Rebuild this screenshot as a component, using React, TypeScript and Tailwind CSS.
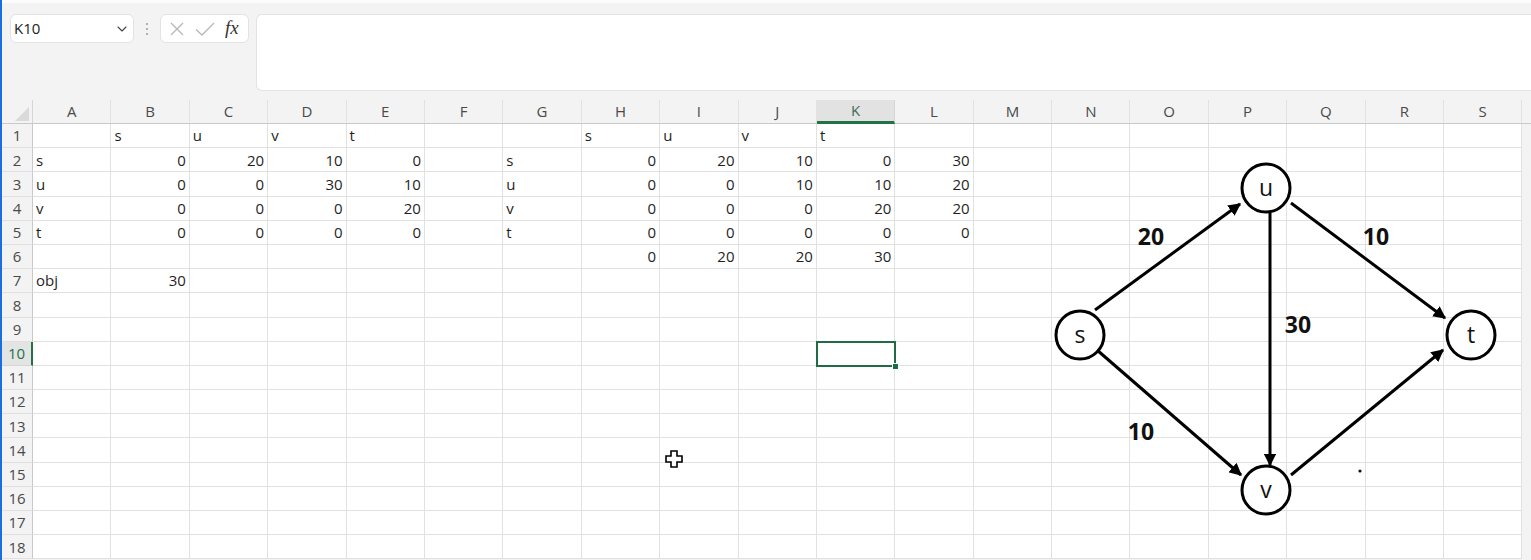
import { ChevronDown } from 'lucide-react';

const COLS = 'ABCDEFGHIJKLMNOPQRS'.split('');
const ROWS = Array.from({ length: 18 }, (_, i) => i + 1);

const data: Record<string, string> = {
  B1: 's', C1: 'u', D1: 'v', E1: 't',
  H1: 's', I1: 'u', J1: 'v', K1: 't',
  A2: 's', B2: '0', C2: '20', D2: '10', E2: '0',
  G2: 's', H2: '0', I2: '20', J2: '10', K2: '0', L2: '30',
  A3: 'u', B3: '0', C3: '0', D3: '30', E3: '10',
  G3: 'u', H3: '0', I3: '0', J3: '10', K3: '10', L3: '20',
  A4: 'v', B4: '0', C4: '0', D4: '0', E4: '20',
  G4: 'v', H4: '0', I4: '0', J4: '0', K4: '20', L4: '20',
  A5: 't', B5: '0', C5: '0', D5: '0', E5: '0',
  G5: 't', H5: '0', I5: '0', J5: '0', K5: '0', L5: '0',
  H6: '0', I6: '20', J6: '20', K6: '30',
  A7: 'obj', B7: '30',
};

function Toolbar() {
  return (
    <div className="h-[100px] border-t-[3px] border-[#fbfbfb] flex items-start pt-[11px] pl-[8px] gap-0">
      <div className="w-[124px] h-[29px] bg-white rounded-md border border-[#e3e3e3] flex items-center justify-between pl-[3px] pr-[3px] text-[15px] text-[#222]">
        <span>K10</span>
        <ChevronDown size={16} strokeWidth={1.6} className="text-[#444]" />
      </div>
      <div className="w-[26px] h-[29px] flex flex-col items-center justify-center gap-[3px]">
        <span className="w-[2px] h-[2px] bg-[#9a9a9a] rounded-full" />
        <span className="w-[2px] h-[2px] bg-[#9a9a9a] rounded-full" />
        <span className="w-[2px] h-[2px] bg-[#9a9a9a] rounded-full" />
      </div>
      <div className="w-[89px] h-[29px] bg-white rounded-md border border-[#e3e3e3] flex items-center pl-[8px] gap-[10px]">
        <svg width="16" height="16" viewBox="0 0 16 16" className="text-[#b8b8b8]">
          <path d="M2 2 L14 14 M14 2 L2 14" stroke="currentColor" strokeWidth="1.3" fill="none" />
        </svg>
        <svg width="20" height="16" viewBox="0 0 20 16" className="text-[#b8b8b8]">
          <path d="M1 8.5 L7 14 L19 2" stroke="currentColor" strokeWidth="1.3" fill="none" />
        </svg>
        <span className="font-['Liberation_Serif',serif] italic text-[19px] text-[#333] leading-none -mt-[2px]">fx</span>
      </div>
      <div className="ml-[7px] flex-1 h-[77px] bg-white rounded-l-md border border-r-0 border-[#e3e3e3]" />
    </div>
  );
}

function HeaderRow() {
  return (
    <div className="flex h-[24px] border-b border-[#c9c9c9]">
      <div className="w-[31px] shrink-0 relative border-r border-[#d6d6d6]">
        <svg width="14" height="14" viewBox="0 0 14 14" className="absolute right-[3px] bottom-[2px]">
          <polygon points="14,0 14,14 0,14" fill="#dadada" />
        </svg>
      </div>
      {COLS.map(c => (
        <div
          key={c}
          className={
            c === 'K'
              ? 'w-[78.4px] shrink-0 flex items-center justify-center text-[15px] text-[#3c6e53] bg-[#e2e2e2] border-r border-[#d6d6d6] border-b-[3px] border-b-[#217346] -mb-px'
              : 'w-[78.4px] shrink-0 flex items-center justify-center text-[15px] text-[#4a4a4a] border-r border-[#e2e2e2]'
          }
        >
          {c}
        </div>
      ))}
    </div>
  );
}

function Row({ r }: { r: number }) {
  const active = r === 10;
  return (
    <div className="flex h-[24.2px]">
      <div
        className={
          active
            ? 'w-[31px] shrink-0 flex items-center justify-center text-[15px] text-[#217346] bg-[#e4e4e4] border-r-2 border-[#217346] border-b border-b-[#d6d6d6]'
            : 'w-[31px] shrink-0 flex items-center justify-center text-[15px] text-[#4a4a4a] border-r border-[#c9c9c9] border-b border-b-[#e0e0e0]'
        }
      >
        {r}
      </div>
      {COLS.map(c => {
        const v = data[`${c}${r}`];
        const num = v !== undefined && /^\d+$/.test(v);
        return (
          <div
            key={c}
            className={
              'w-[78.4px] shrink-0 bg-white border-r border-b border-[#e1e1e1] flex items-center px-[3px] text-[15px] text-[#1f1f1f] relative ' +
              (num ? 'justify-end' : 'justify-start')
            }
          >
            {v}
            {active && c === 'K' && (
              <div className="absolute z-10 -left-px -top-px w-[80px] h-[26px] border-2 border-[#1e6b45]">
                <div className="absolute -right-[5px] -bottom-[5px] w-[7px] h-[7px] bg-[#1e6b45] border border-white" />
              </div>
            )}
          </div>
        );
      })}
    </div>
  );
}

function Graph() {
  const nodes = [
    { id: 's', x: 1078, y: 335 },
    { id: 'u', x: 1264, y: 188 },
    { id: 't', x: 1469, y: 335 },
    { id: 'v', x: 1264, y: 490 },
  ];
  const edges = [
    [1093, 310, 1238, 204],
    [1289, 203, 1443, 318],
    [1268, 213, 1268, 465],
    [1095, 350, 1239, 475],
    [1289, 475, 1441, 350],
  ];
  const labels = [
    { t: '20', x: 1149, y: 238 },
    { t: '10', x: 1374, y: 238 },
    { t: '30', x: 1296, y: 326 },
    { t: '10', x: 1139, y: 433 },
  ];
  return (
    <svg width="1531" height="560" viewBox="0 0 1531 560" className="absolute left-0 top-0 z-20 pointer-events-none">
      <defs>
        <marker id="arr" viewBox="0 0 10 10" refX="9" refY="5" markerWidth="4.2" markerHeight="4.2" orient="auto" markerUnits="strokeWidth">
          <path d="M0 0 L10 5 L0 10 z" fill="#000" />
        </marker>
      </defs>
      {edges.map((e, i) => (
        <line key={i} x1={e[0]} y1={e[1]} x2={e[2]} y2={e[3]} stroke="#000" strokeWidth="3" markerEnd="url(#arr)" />
      ))}
      {nodes.map(n => (
        <g key={n.id}>
          <circle cx={n.x} cy={n.y} r="24" fill="#fff" stroke="#000" strokeWidth="3" />
          <text x={n.x} y={n.y + 2} textAnchor="middle" dominantBaseline="middle" fontFamily="Open Sans, sans-serif" fontSize="23" fill="#111">
            {n.id}
          </text>
        </g>
      ))}
      {labels.map((l, i) => (
        <text key={i} x={l.x} y={l.y + 1} textAnchor="middle" dominantBaseline="middle" fontFamily="Open Sans, sans-serif" fontWeight="700" fontSize="23" fill="#111">
          {l.t}
        </text>
      ))}
      <circle cx="1358" cy="471" r="1.6" fill="#111" />
      <path
        d="M669 451 h6 v5 h5 v6 h-5 v5 h-6 v-5 h-5 v-6 h5 z"
        fill="#fff"
        stroke="#000"
        strokeWidth="1.6"
        strokeLinejoin="miter"
      />
    </svg>
  );
}

export default function App() {
  return (
    <div className="w-[1531px] h-[560px] overflow-hidden relative bg-[#f3f3f3] border-l-2 border-[#1a6fe0] font-['Open_Sans',sans-serif]">
      <Toolbar />
      <HeaderRow />
      <div className="flex flex-col">
        {ROWS.map(r => (
          <Row key={r} r={r} />
        ))}
      </div>
      <Graph />
    </div>
  );
}
